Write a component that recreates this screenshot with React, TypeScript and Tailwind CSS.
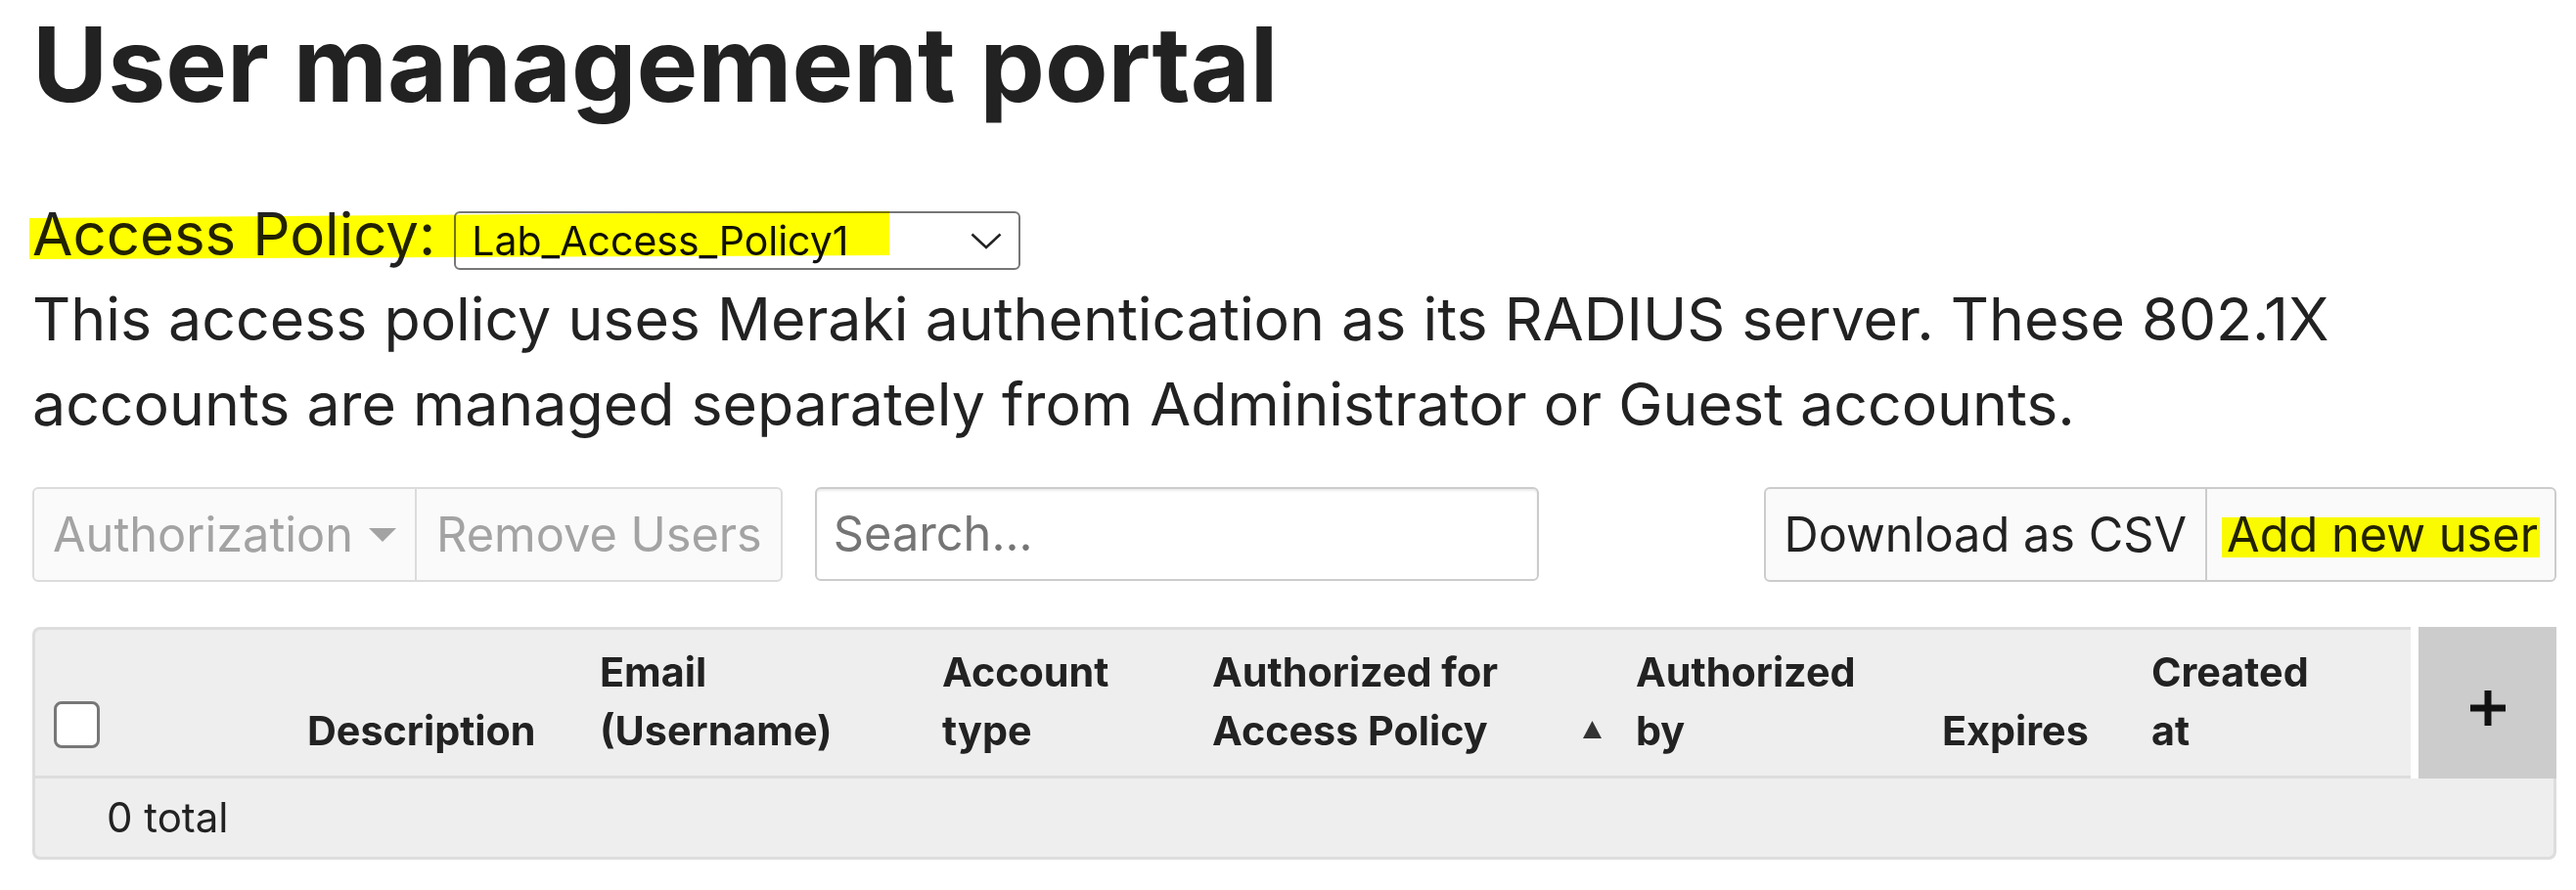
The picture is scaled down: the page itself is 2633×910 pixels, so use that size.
import React from "react";

function Chevron() {
  return (
    <svg width="32" height="17" viewBox="0 0 32 17" fill="none">
      <path d="M1.5 1.5 L16 15 L30.5 1.5" stroke="#222" strokeWidth="2.6" strokeLinejoin="miter" />
    </svg>
  );
}

function Caret() {
  return (
    <svg width="28" height="14" viewBox="0 0 28 14">
      <polygon points="0,0 28,0 14,14" fill="#a3a3a3" />
    </svg>
  );
}

function SortUp() {
  return (
    <svg width="21" height="20" viewBox="0 0 21 20">
      <polygon points="10.5,1 20,19 1,19" fill="#333" />
    </svg>
  );
}

function Plus() {
  return (
    <svg width="36" height="36" viewBox="0 0 36 36">
      <rect x="14.5" y="0" width="7" height="36" fill="#111" />
      <rect x="0" y="14.5" width="36" height="7" fill="#111" />
    </svg>
  );
}

export default function App() {
  return (
    <div className="relative min-h-[910px] bg-white pl-[33px] pr-[20px] text-[#222] [font-family:Inter,'Noto_Sans',sans-serif]">
      <h1 className="pt-[13px] text-[105.4px] font-bold leading-none">User management portal</h1>

      <div className="mt-[78px] flex h-[87px] items-start leading-[87px]">
        <span className="text-[60px]">Access Policy:</span>
        <div className="ml-[19px] mt-[20px] flex h-[60px] w-[579px] items-center justify-between rounded-[6px] border-2 border-[#767676] bg-white pl-[16px] pr-[17px] text-[41px] leading-none text-[#111]">
          <span>Lab_Access_Policy1</span>
          <Chevron />
        </div>
      </div>
      <p className="text-[60.8px] leading-[87px]">
        This access policy uses Meraki authentication as its RADIUS server. These 802.1X
        <br />
        accounts are managed separately from Administrator or Guest accounts.
      </p>

      <div className="mt-[41px] flex items-start justify-between text-[48.7px]">
        <div className="flex items-start">
          <div className="flex h-[97px] items-stretch rounded-[6px] border-2 border-[#dcdcdc] bg-[#fafafa] text-[#a3a3a3]">
            <div className="flex items-center gap-[16px] pl-[19px] pr-[19px]">
              <span className="leading-none">Authorization</span>
              <Caret />
            </div>
            <div className="w-[2px] bg-[#dcdcdc]" />
            <div className="flex items-center pl-[20px] pr-[19px]">
              <span className="leading-none">Remove Users</span>
            </div>
          </div>
          <div className="ml-[33px] flex h-[96px] w-[740px] items-center rounded-[6px] border-2 border-[#cccccc] bg-white pl-[17px] shadow-[inset_0_2px_2px_rgba(0,0,0,0.08)]">
            <span className="leading-none text-[#757575]">Search...</span>
          </div>
        </div>
        <div className="flex h-[97px] items-stretch rounded-[6px] border-2 border-[#cccccc] bg-[#fafafa] text-[#222]">
          <div className="flex items-center pl-[19px] pr-[19px]">
            <span className="leading-none">Download as CSV</span>
          </div>
          <div className="w-[2px] bg-[#cccccc]" />
          <div className="flex items-center pl-[20px] pr-[17px]">
            <span className="leading-none">Add new user</span>
          </div>
        </div>
      </div>

      <div className="mt-[46px] flex flex-col">
        <div className="flex items-stretch">
          <div className="flex flex-1 items-end rounded-tl-[8px] border-b-[3px] border-l-[3px] border-t-[3px] border-[#dddddd] bg-[#eeeeee] pb-[16px] pt-[13px] text-[41.3px] font-bold leading-[60px]">
            <div className="w-[278px] pb-[12px] pl-[19px]">
              <div className="h-[48px] w-[47px] rounded-[8px] border-[3px] border-[#777777] bg-white" />
            </div>
            <div className="w-[299px]">Description</div>
            <div className="w-[350px]">
              Email
              <br />
              (Username)
            </div>
            <div className="w-[276px]">
              Account
              <br />
              type
            </div>
            <div className="flex w-[433px] items-end">
              <div className="w-[378px]">
                Authorized for
                <br />
                Access Policy
              </div>
              <div className="mb-[21px]">
                <SortUp />
              </div>
            </div>
            <div className="w-[313px]">
              Authorized
              <br />
              by
            </div>
            <div className="w-[214px]">Expires</div>
            <div className="flex-1">
              Created
              <br />
              at
            </div>
          </div>
          <div className="w-[8px] bg-white" />
          <div className="flex w-[141px] items-center justify-center bg-[#cccccc] pt-[10px]">
            <Plus />
          </div>
        </div>
        <div className="h-[83px] rounded-b-[8px] border-b-[3px] border-l-[3px] border-r-[3px] border-[#dddddd] bg-[#eeeeee] pl-[73px] text-[42px] leading-[80px]">
          0 total
        </div>
      </div>

      <div className="pointer-events-none absolute left-[30px] top-[216px] h-[50px] w-[879px] bg-[#ffff00] mix-blend-multiply [clip-path:polygon(0_7px,100%_0,100%_45px,0_49px)]" />
      <div className="pointer-events-none absolute left-[2271px] top-[529px] h-[41px] w-[325px] bg-[#ffff00] mix-blend-multiply" />
    </div>
  );
}
